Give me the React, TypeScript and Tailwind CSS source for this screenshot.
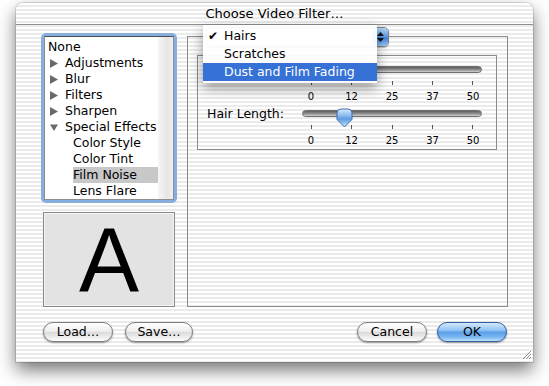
import React from 'react';

const stripes =
  'bg-[image:repeating-linear-gradient(180deg,#ffffff_0px,#ffffff_2px,#ebebeb_2px,#ebebeb_4px)]';

type Item = { label: string; kind: 'plain' | 'closed' | 'open' | 'child'; selected?: boolean };

const items: Item[] = [
  { label: 'None', kind: 'plain' },
  { label: 'Adjustments', kind: 'closed' },
  { label: 'Blur', kind: 'closed' },
  { label: 'Filters', kind: 'closed' },
  { label: 'Sharpen', kind: 'closed' },
  { label: 'Special Effects', kind: 'open' },
  { label: 'Color Style', kind: 'child' },
  { label: 'Color Tint', kind: 'child' },
  { label: 'Film Noise', kind: 'child', selected: true },
  { label: 'Lens Flare', kind: 'child' },
];

function Disclosure({ open }: { open: boolean }) {
  return (
    <svg width="8" height="9" viewBox="0 0 8 9" className="shrink-0">
      {open ? <polygon points="0,1.5 8,1.5 4,8" fill="#6a6a6a" /> : <polygon points="0,0 8,4.5 0,9" fill="#6a6a6a" />}
    </svg>
  );
}

function FilterList() {
  return (
    <div className="h-[170px] rounded-[5px] border-[3px] border-[#86afe0] bg-[#86afe0]">
      <div className="flex h-full border border-[#8e8e8e] border-t-[#4d4d4d] bg-white">
        <div className="flex-1 pt-[2px]">
          {items.map((it) => {
            if (it.kind === 'child') {
              return (
                <div key={it.label} className="flex h-[16px] items-center">
                  <div className={`ml-[28px] flex h-[16px] w-[85px] items-center ${it.selected ? 'bg-[#c8c8c8]' : ''}`}>
                    {it.label}
                  </div>
                </div>
              );
            }
            if (it.kind === 'plain') {
              return (
                <div key={it.label} className="flex h-[16px] items-center pl-[3px]">
                  {it.label}
                </div>
              );
            }
            return (
              <div key={it.label} className="flex h-[16px] items-center gap-[7px] pl-[5px]">
                <Disclosure open={it.kind === 'open'} />
                <span>{it.label}</span>
              </div>
            );
          })}
        </div>
        <div className="w-[15px] bg-[linear-gradient(90deg,#f6f6f6,#e6e6e6_60%,#efefef)]" />
      </div>
    </div>
  );
}

function Thumb() {
  return (
    <svg width="17" height="20" viewBox="0 0 17 20">
      <defs>
        <linearGradient id="thumbFill" x1="0" y1="0" x2="0" y2="1">
          <stop offset="0" stopColor="#dbeafc" />
          <stop offset="0.45" stopColor="#78aeea" />
          <stop offset="0.55" stopColor="#5c9be4" />
          <stop offset="1" stopColor="#cfe6fd" />
        </linearGradient>
      </defs>
      <path
        d="M1,5 A4,4 0 0 1 5,1 H12 A4,4 0 0 1 16,5 V11.5 L8.5,19 L1,11.5 Z"
        fill="url(#thumbFill)"
        stroke="#3f6fae"
        strokeWidth="1"
      />
    </svg>
  );
}

// label is hidden under the open menu on the first row
function SliderRow({ label, value }: { label?: string; value: number }) {
  const ticks = ['0', '12', '25', '37', '50'];
  const left = 9 + (value / 50) * 162 - 8.5;
  return (
    <div className="flex h-[44px]">
      <div className="w-[104px] pl-[9px] pt-[6px] leading-[16px]">{label}</div>
      <div className="w-[180px] pt-[10px]">
        <div className="relative h-[7px] rounded-full border border-[#6e6e6e] bg-[linear-gradient(180deg,#5e5e5e,#8c8c8c_50%,#cfcfcf)]">
          <div className="absolute top-[-3px]" style={{ left }}>
            <Thumb />
          </div>
        </div>
        <div className="mt-[8px] flex h-[4px] justify-between px-[9px]">
          {ticks.map((t) => (
            <div key={t} className="w-px bg-[#555555]" />
          ))}
        </div>
        <div className="mt-[6px] flex justify-between px-[9px] text-[10px] leading-[11px]">
          {ticks.map((t) => (
            <div key={t} className="flex w-0 justify-center">
              {t}
            </div>
          ))}
        </div>
      </div>
    </div>
  );
}

function PopupButton() {
  return (
    <div className="absolute left-[18px] top-[-10px] flex h-[20px] w-[183px] overflow-hidden rounded-[5px] border border-[#7f7f7f] shadow-[0_1px_1px_rgba(0,0,0,0.25)]">
      <div className="flex-1 bg-[linear-gradient(180deg,#ffffff,#eeeeee_50%,#f8f8f8)]" />
      <div className="flex w-[16px] flex-col items-center justify-center gap-[2px] bg-[linear-gradient(180deg,#b4d4f6,#5c9be6_50%,#3e82dc_55%,#9ccaf6)]">
        <svg width="7" height="4" viewBox="0 0 7 4">
          <polygon points="0,4 3.5,0 7,4" fill="#111" />
        </svg>
        <svg width="7" height="4" viewBox="0 0 7 4">
          <polygon points="0,0 7,0 3.5,4" fill="#111" />
        </svg>
      </div>
    </div>
  );
}

function AquaButton({ label, width, primary }: { label: string; width: string; primary?: boolean }) {
  return (
    <div
      className={`flex h-[20px] ${width} items-center justify-center rounded-full border text-black shadow-[0_1px_2px_rgba(0,0,0,0.4)] ${
        primary
          ? 'border-[#2f5f9f] bg-[linear-gradient(180deg,#d4e9fd_0%,#92c3f4_40%,#5b9fe9_52%,#7db9f2_80%,#c6e5fd_100%)]'
          : 'border-[#7d7d7d] bg-[linear-gradient(180deg,#ffffff_0%,#f0f0f0_45%,#dcdcdc_52%,#eeeeee_80%,#ffffff_100%)]'
      }`}
    >
      {label}
    </div>
  );
}

export default function App() {
  return (
    <div className="relative h-[386px] w-[549px] overflow-hidden bg-white font-['DejaVu_Sans','Liberation_Sans',sans-serif] text-[12.5px] text-black">
      {/* window */}
      <div
        className={`relative ml-[16px] mt-[3px] flex h-[359px] w-[517px] flex-col rounded-t-[7px] ${stripes} shadow-[0_0_0_1px_rgba(0,0,0,0.12),0_8px_18px_rgba(0,0,0,0.55)]`}
      >
        <div className="flex h-[22px] items-center justify-center border-b border-[#8f8f8f] text-[13px]">
          Choose Video Filter…
        </div>

        <div className="flex pl-[25px] pt-[8px]">
          <div className="flex w-[136px] flex-col">
            <FilterList />
            <div className="mx-[2px] mt-[9px] flex h-[95px] items-center justify-center border border-[#8a8a8a] bg-[#e3e3e3] shadow-[inset_0_0_0_1px_#f4f4f4]">
              <span className="font-['Liberation_Sans',sans-serif] text-[90px] leading-none">A</span>
            </div>
          </div>

          <div className="relative ml-[10px] mt-[3px] h-[271px] w-[321px] border border-[#8c8c8c]">
            <PopupButton />
            <div className="ml-[9px] mt-[18px] h-[95px] w-[300px] border border-[#8c8c8c]">
              <SliderRow value={4} />
              <SliderRow label="Hair Length:" value={10} />
            </div>
          </div>
        </div>

        <div className="mt-[15px] flex pl-[27px] pr-[26px]">
          <AquaButton label="Load…" width="w-[70px]" />
          <div className="ml-[12px]">
            <AquaButton label="Save…" width="w-[68px]" />
          </div>
          <div className="flex-1" />
          <AquaButton label="Cancel" width="w-[70px]" />
          <div className="ml-[10px]">
            <AquaButton label="OK" width="w-[70px]" primary />
          </div>
        </div>

        {/* resize grip */}
        <svg className="absolute bottom-[2px] right-[1px]" width="11" height="11" viewBox="0 0 11 11">
          <path d="M10,2 L2,10 M10,5 L5,10 M10,8 L8,10" stroke="#8a8a8a" strokeWidth="1" />
          <path d="M11,3 L3,11 M11,6 L6,11 M11,9 L9,11" stroke="#ffffff" strokeWidth="1" />
        </svg>
      </div>

      {/* open popup menu */}
      <div className="absolute left-[203px] top-[25px] w-[174px] bg-white/95 py-[2px] shadow-[0_5px_12px_rgba(0,0,0,0.4)]">
        <div className="flex h-[18px] items-center">
          <span className="w-[21px] pl-[5px] text-[12px]">✔</span>
          <span>Hairs</span>
        </div>
        <div className="flex h-[18px] items-center pl-[21px]">Scratches</div>
        <div className="flex h-[18px] items-center bg-[#3672d6] pl-[21px] text-white">Dust and Film Fading</div>
      </div>
    </div>
  );
}
